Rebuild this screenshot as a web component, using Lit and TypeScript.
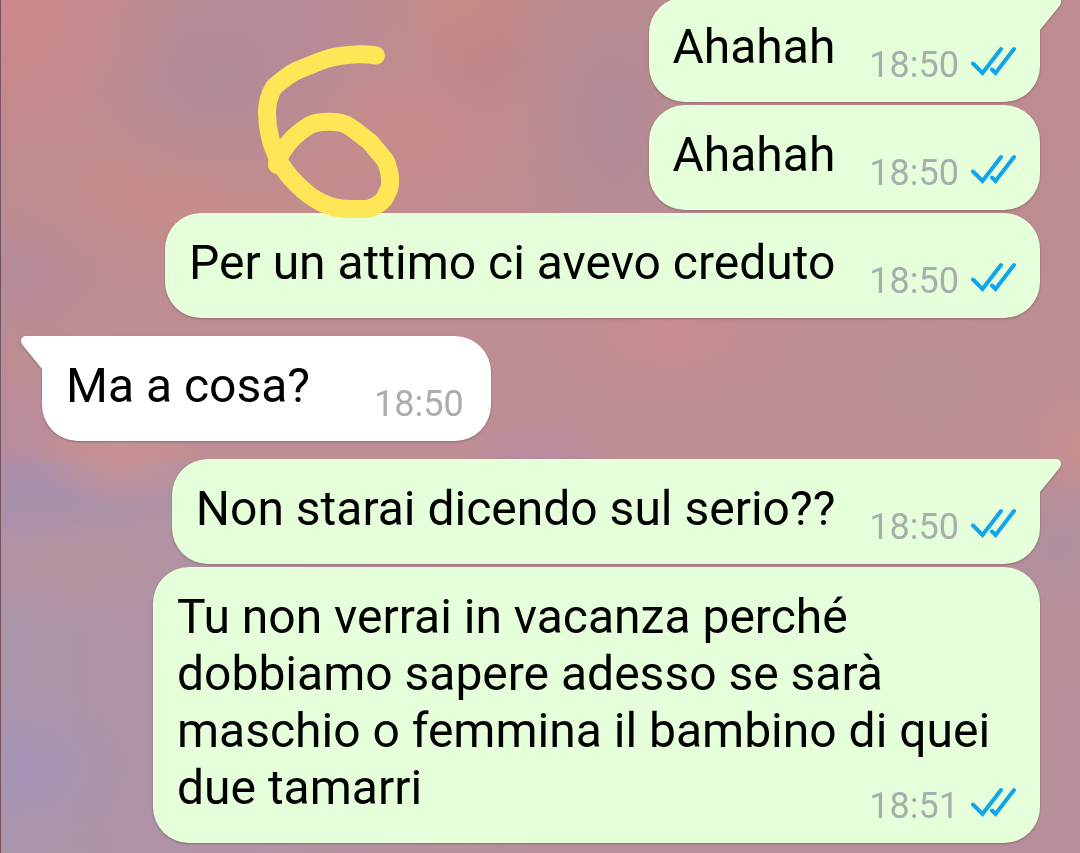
import { LitElement, html, css, svg } from "lit";
import { customElement, property } from "lit/decorators.js";

interface Message {
  text: string;
  time: string;
  mine: boolean;
  first: boolean;
}

const messages: Message[] = [
  { text: "Ahahah", time: "18:50", mine: true, first: true },
  { text: "Ahahah", time: "18:50", mine: true, first: false },
  { text: "Per un attimo ci avevo creduto", time: "18:50", mine: true, first: false },
  { text: "Ma a cosa?", time: "18:50", mine: false, first: true },
  { text: "Non starai dicendo sul serio??", time: "18:50", mine: true, first: true },
  {
    text: "Tu non verrai in vacanza perché dobbiamo sapere adesso se sarà maschio o femmina il bambino di quei due tamarri",
    time: "18:51",
    mine: true,
    first: false,
  },
];

const tail = svg`<path d="M0 0H17C22 0 23.500 5 20.500 9L1 33H0Z" fill="currentColor" />`;

@customElement("chat-bubble")
export class ChatBubble extends LitElement {
  @property({ attribute: false }) message!: Message;

  static styles = css`
    :host {
      display: flex;
    }
    .bubble {
      position: relative;
      display: flow-root;
      box-sizing: border-box;
      max-width: calc(100% - 111px);
      padding: 21px 24px 16px;
      border-radius: 36px;
      background: currentColor;
      filter: drop-shadow(0 1px 1px rgba(80, 50, 60, 0.4));
    }
    .mine {
      margin-left: auto;
      color: #e6ffdb;
    }
    .theirs {
      padding-right: 27px;
      color: #ffffff;
    }
    .mine.first {
      border-top-right-radius: 0;
    }
    .theirs.first {
      border-top-left-radius: 0;
    }
    .tail {
      position: absolute;
      top: 0;
      width: 22px;
      height: 33px;
    }
    .mine .tail {
      left: calc(100% - 1px);
    }
    .theirs .tail {
      right: calc(100% - 1px);
      transform: scaleX(-1);
    }
    .text {
      color: #000000;
      font-size: 48px;
      line-height: 57px;
    }
    .meta {
      float: right;
      display: flex;
      align-items: flex-start;
      gap: 12px;
      margin: 26px 0 0 34px;
      color: #a7aeae;
      font-size: 36px;
      line-height: 42px;
    }
    .theirs .meta {
      margin-left: 64px;
    }
    .ticks {
      width: 45px;
      height: 30px;
      margin-top: 2px;
    }
  `;

  render() {
    const { text, time, mine, first } = this.message;
    return html`<article class="bubble ${mine ? "mine" : "theirs"} ${first ? "first" : ""}">
      ${first ? html`<svg class="tail" viewBox="0 0 22 33" aria-hidden="true">${tail}</svg>` : null}
      <span class="text">${text}</span>
      <span class="meta">
        <time>${time}</time>
        ${mine
          ? html`<svg class="ticks" viewBox="0 0 45 30" role="img" aria-label="Letto" fill="none" stroke="#12a5e9" stroke-width="4" stroke-linecap="round">
              <path d="M2 17.500L11.500 27L30 3" />
              <path d="M21 23.500L24.500 27L43 3" />
            </svg>`
          : null}
      </span>
    </article>`;
  }
}

@customElement("app-root")
export class AppRoot extends LitElement {
  static styles = css`
    :host {
      display: block;
      font-family: Roboto, "Noto Sans", sans-serif;
    }
    .chat {
      position: relative;
      display: flex;
      flex-direction: column;
      justify-content: flex-end;
      box-sizing: border-box;
      height: 100vh;
      overflow: hidden;
      padding: 0 40px 10px 41px;
      border-left: 1px solid #74525f;
      background:
        radial-gradient(ellipse 8% 6% at 11% 53.500%, rgba(204, 146, 148, 0.9), transparent),
        radial-gradient(ellipse 12% 6% at 4% 58%, rgba(166, 142, 170, 0.8), transparent),
        radial-gradient(ellipse 14% 8% at 6% 66%, rgba(182, 148, 158, 0.8), transparent),
        radial-gradient(ellipse 8% 12% at 0% 54%, rgba(178, 138, 170, 0.6), transparent),
        radial-gradient(ellipse 10% 9% at 2% 90%, rgba(164, 148, 184, 0.9), transparent),
        radial-gradient(ellipse 16% 18% at 0% 2%, rgba(206, 136, 138, 0.95), transparent),
        radial-gradient(ellipse 13% 16% at 20% 9%, rgba(174, 138, 152, 0.9), transparent),
        radial-gradient(ellipse 14% 12% at 28% 2%, rgba(184, 138, 152, 0.8), transparent),
        radial-gradient(ellipse 10% 8% at 42% 1%, rgba(202, 138, 130, 0.8), transparent),
        radial-gradient(ellipse 6% 8% at 45% 6%, rgba(188, 130, 134, 0.8), transparent),
        radial-gradient(ellipse 20% 12% at 18% 22%, rgba(202, 140, 136, 0.9), transparent),
        radial-gradient(ellipse 14% 14% at 38% 16%, rgba(202, 138, 138, 0.8), transparent),
        radial-gradient(ellipse 10% 20% at 57% 14%, rgba(174, 138, 150, 0.9), transparent),
        radial-gradient(ellipse 10% 12% at 2% 32%, rgba(180, 138, 152, 0.8), transparent),
        radial-gradient(ellipse 12% 8% at 62% 39%, rgba(202, 140, 144, 0.8), transparent),
        radial-gradient(ellipse 8% 6% at 50% 54%, rgba(184, 140, 164, 0.8), transparent),
        radial-gradient(ellipse 8% 9% at 86% 45%, rgba(180, 144, 146, 0.8), transparent),
        radial-gradient(ellipse 5% 7% at 100% 52%, rgba(202, 144, 142, 0.9), transparent),
        radial-gradient(ellipse 8% 10% at 98% 64%, rgba(172, 144, 162, 0.9), transparent),
        linear-gradient(90deg, #ac94aa 0%, rgba(172, 148, 170, 0) 50%) 0 100% / 100% 46% no-repeat,
        linear-gradient(180deg, #bd8b90 0%, #bd8e94 60%, #b78f9c 100%);
    }
    .list {
      display: flex;
      flex-direction: column;
      gap: 3px;
      margin: 0;
      padding: 0;
      list-style: none;
    }
    .turn {
      margin-top: 15px;
    }
    .doodle {
      position: absolute;
      top: 40px;
      left: 250px;
      width: 160px;
      height: 184px;
    }
  `;

  render() {
    return html`<main class="chat">
      <ul class="list">
        ${messages.map(
          (m, i) => html`<li class=${i > 0 && m.first ? "turn" : ""}><chat-bubble .message=${m}></chat-bubble></li>`,
        )}
      </ul>
      <svg class="doodle" viewBox="251 40 160 184" fill="none" stroke="#ffe656" stroke-width="18" stroke-linecap="round" stroke-linejoin="round" aria-hidden="true">
        <path
          d="M376 55.500C370 54.500 364 54 358 54.300C346 55 338 56 330 58C319 61 309 66 298 70C289 74 281 81 274 87C269 95 267 104 267 113C267 121 268 129 270 137C272 146 276 155 280 163C286 173 294 182 303 190C311 197 319 202 327 205C335 208 342 209 350 209H368C378 206 385 200 387 193C391 188 390 182 390 177C389 171 388 165 385 160C380 154 375 148 370 142C362 136 354 129 347 125C341 122 336 121.700 330 121.700C323 122 316 122 310 125C303 129 298 133 293 138C289 142 285 147 282 152C279 156 277 161 277 165"
        />
      </svg>
    </main>`;
  }
}
